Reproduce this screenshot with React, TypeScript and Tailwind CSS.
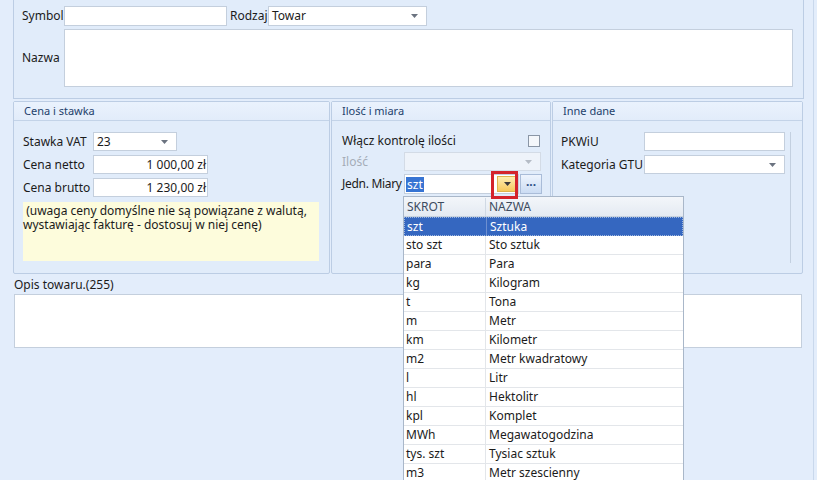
import React from 'react';

const units: [string, string][] = [
  ['szt', 'Sztuka'],
  ['sto szt', 'Sto sztuk'],
  ['para', 'Para'],
  ['kg', 'Kilogram'],
  ['t', 'Tona'],
  ['m', 'Metr'],
  ['km', 'Kilometr'],
  ['m2', 'Metr kwadratowy'],
  ['l', 'Litr'],
  ['hl', 'Hektolitr'],
  ['kpl', 'Komplet'],
  ['MWh', 'Megawatogodzina'],
  ['tys. szt', 'Tysiac sztuk'],
  ['m3', 'Metr szescienny'],
];

function Arrow({ disabled, dark }: { disabled?: boolean; dark?: boolean }) {
  return (
    <svg width="7" height="4" viewBox="0 0 7 4" className="shrink-0">
      <path d="M0 0h7L3.5 4z" fill={disabled ? '#b5bcc6' : dark ? '#3b3b3b' : '#6b7380'} />
    </svg>
  );
}

function Select({
  value,
  width,
  disabled,
  className = '',
}: {
  value?: string;
  width: string;
  disabled?: boolean;
  className?: string;
}) {
  return (
    <div
      className={`flex h-[19px] shrink-0 items-center justify-between border pl-[3px] pr-[8px] ${
        disabled ? 'border-[#d3dbe6] bg-[#eef3fa]' : 'border-[#c4cfdd] bg-white'
      } ${width} ${className}`}
    >
      <span>{value}</span>
      <Arrow disabled={disabled} />
    </div>
  );
}

function GroupBox({
  title,
  width,
  children,
}: {
  title: string;
  width: string;
  children: React.ReactNode;
}) {
  return (
    <div className={`flex h-[173px] flex-col rounded-[2px] border border-[#bccde4] bg-[#e1ecfa] ${width}`}>
      <div className="flex h-[19px] shrink-0 items-center border-b border-[#c3d3e8] bg-gradient-to-b from-[#eaf2fd] to-[#e2ecfa] pl-[10px] text-[11px] text-[#23416b]">
        {title}
      </div>
      {children}
    </div>
  );
}

export default function App() {
  return (
    <div className="relative h-[480px] w-[817px] overflow-hidden whitespace-nowrap bg-[#e3edfb] font-['Noto_Sans',sans-serif] text-[12px] text-[#1b1b1b]">
      <div className="h-full w-[814px] border-r border-[#c9d8ec] pl-[13px]">
        {/* Top panel */}
        <div className="h-[99px] w-[791px] border-x border-b border-[#bccde4] bg-[#e1ecfa] pl-[8px] pt-[6px]">
          <div className="flex h-[20px] items-center">
            <span className="w-[42px] shrink-0">Symbol</span>
            <div className="h-[20px] w-[163px] shrink-0 border border-[#c4cfdd] bg-white" />
            <span className="ml-[3px] w-[38px] shrink-0">Rodzaj</span>
            <Select value="Towar" width="w-[159px]" className="h-[20px]" />
          </div>
          <div className="mt-[3px] flex items-center">
            <span className="w-[42px] shrink-0">Nazwa</span>
            <div className="h-[58px] w-[729px] border border-[#c4cfdd] bg-white" />
          </div>
        </div>

        {/* Group boxes */}
        <div className="mt-[2px] flex gap-[1px]">
          <GroupBox title="Cena i stawka" width="w-[317px]">
            <div className="flex flex-col gap-[4px] pl-[9px] pt-[11px]">
              <div className="flex items-center">
                <span className="w-[70px] shrink-0">Stawka VAT</span>
                <Select value="23" width="w-[84px]" />
              </div>
              <div className="flex items-center">
                <span className="w-[70px] shrink-0">Cena netto</span>
                <div className="flex h-[19px] w-[115px] items-center justify-end border border-[#c4cfdd] bg-white pr-[1px]">
                  1 000,00 zł
                </div>
              </div>
              <div className="flex items-center">
                <span className="w-[70px] shrink-0">Cena brutto</span>
                <div className="flex h-[19px] w-[115px] items-center justify-end border border-[#c4cfdd] bg-white pr-[1px]">
                  1 230,00 zł
                </div>
              </div>
              <div className="mt-[1px] h-[59px] w-[296px] bg-[#fdfcdc] pt-[2px] leading-[14px]">
                {'\u00a0'}(uwaga ceny domyślne nie są powiązane z walutą,
                <br />
                wystawiając fakturę - dostosuj w niej cenę)
              </div>
            </div>
          </GroupBox>

          <GroupBox title="Ilość i miara" width="w-[220px]">
            <div className="flex flex-col pl-[10px] pr-[9px] pt-[10px]">
              <div className="flex h-[20px] items-center justify-between">
                <span>Włącz kontrolę ilości</span>
                <div className="mr-[1px] h-[12px] w-[12px] border border-[#8a96a6] bg-[#f4f7fb]" />
              </div>
              <div className="mt-[1px] flex items-center">
                <span className="w-[62px] shrink-0 text-[#a5adb8]">Ilość</span>
                <Select width="w-[137px]" disabled />
              </div>
              <div className="mt-[3px] flex items-center">
                <span className="w-[62px] shrink-0 tracking-[-0.3px]">Jedn. Miary</span>
                <div className="flex h-[20px] w-[115px] shrink-0 items-center border border-[#c4cfdd] bg-white pl-[1px] pr-[1px]">
                  <span className="bg-[#3774d3] px-[1px] leading-[15px] text-white">szt</span>
                  <div className="ml-auto flex h-[16px] w-[20px] items-center justify-center border border-[#e0b34c] bg-gradient-to-b from-[#fdeeb0] to-[#f6c95a]">
                    <Arrow dark />
                  </div>
                </div>
                <div className="ml-[1px] flex h-[20px] w-[22px] shrink-0 items-center justify-center border border-[#a9bcd8] bg-gradient-to-b from-[#eef4fd] to-[#cbdcf3] pb-[4px] font-bold text-[#2d4f86]">
                  ...
                </div>
              </div>
            </div>
          </GroupBox>

          <GroupBox title="Inne dane" width="w-[251px]">
            <div className="ml-[8px] mt-[11px] flex h-[131px] w-[230px] flex-col gap-[4px] border-r border-[#c3d0e0]">
              <div className="flex items-center">
                <span className="w-[83px] shrink-0">PKWiU</span>
                <div className="h-[19px] w-[141px] border border-[#c4cfdd] bg-white" />
              </div>
              <div className="flex items-center">
                <span className="w-[83px] shrink-0">Kategoria GTU</span>
                <Select width="w-[141px]" />
              </div>
            </div>
          </GroupBox>
        </div>

        {/* Opis */}
        <div className="ml-[1px] mt-[2px] h-[17px] leading-[17px]">Opis towaru.(255)</div>
        <div className="ml-[1px] mt-[1px] h-[54px] w-[788px] border border-[#c4cfdd] bg-white" />
      </div>

      {/* Dropdown list */}
      <div className="absolute left-[403px] top-[196px] w-[281px] border border-[#a9b7c9] bg-white">
        <div className="flex h-[20px] items-center border-b border-[#c6d1de] bg-gradient-to-b from-[#f3f6fa] to-[#e4eaf2] text-[#3d4b5e]">
          <span className="w-[82px] border-r border-[#d0d9e4] pl-[3px]">SKROT</span>
          <span className="pl-[3px]">NAZWA</span>
        </div>
        {units.map(([code, name], i) => (
          <div
            key={code}
            className={`flex h-[19px] items-center border-b ${
              i === 0
                ? 'border border-dotted border-[#9fb7df] bg-[#3567c0] text-white'
                : 'border-[#e3e6ea]'
            }`}
          >
            <span className={`flex h-full w-[82px] items-center border-r pl-[2px] ${i === 0 ? 'border-[#6d8fd0]' : 'border-[#e3e6ea]'}`}>
              {code}
            </span>
            <span className="pl-[3px]">{name}</span>
          </div>
        ))}
      </div>

      {/* Highlight around dropdown button */}
      <div className="absolute left-[491px] top-[171px] h-[28px] w-[27px] border-[3px] border-[#d4232b]" />
    </div>
  );
}
